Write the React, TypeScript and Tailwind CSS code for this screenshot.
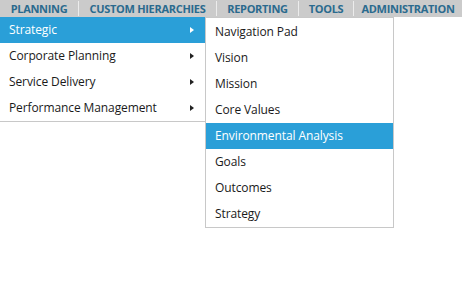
import React from 'react';

const topItems = [
  { label: 'PLANNING', w: 'w-[78px]' },
  { label: 'CUSTOM HIERARCHIES', w: 'w-[137px]' },
  { label: 'REPORTING', w: 'w-[81px]' },
  { label: 'TOOLS', w: 'w-[54px]' },
  { label: 'ADMINISTRATION', w: 'w-[108px]' },
];

const leftItems = ['Strategic', 'Corporate Planning', 'Service Delivery', 'Performance Management'];

const subItems = [
  'Navigation Pad',
  'Vision',
  'Mission',
  'Core Values',
  'Environmental Analysis',
  'Goals',
  'Outcomes',
  'Strategy',
];

const Arrow: React.FC<{ light: boolean }> = ({ light }) => (
  <svg width="4" height="6" viewBox="0 0 4 6" className="shrink-0">
    <path d="M0 0 L4 3 L0 6 Z" fill={light ? '#ffffff' : '#222222'} />
  </svg>
);

export default function App() {
  return (
    <div className="w-[469px] h-[294px] bg-white font-['Open_Sans',sans-serif] overflow-hidden">
      <div className="flex h-[17px] w-[462px] bg-[#cbcbcb] items-center">
        {topItems.map((item, i) => (
          <div key={item.label} className="flex items-center h-full">
            {i > 0 && <div className="w-px h-[15px] bg-[#ececec]" />}
            <span
              className={`${item.w} text-center whitespace-nowrap text-[11px] font-bold tracking-[-0.3px] text-[#2a6a8e] leading-none`}
            >
              {item.label}
            </span>
          </div>
        ))}
      </div>

      <div className="flex items-start">
        <div className="w-[205px] border-b border-[#c8c8c8]">
          {leftItems.map((item, i) => (
            <div
              key={item}
              className={`flex items-center justify-between h-[26px] pl-[9px] pr-[11px] text-[12px] whitespace-nowrap tracking-[-0.1px] ${
                i === 0 ? 'bg-[#2a9fd8] text-white' : 'text-[#1a1a1a]'
              }`}
            >
              <span>{item}</span>
              <Arrow light={i === 0} />
            </div>
          ))}
        </div>

        <div className="w-[189px] border border-[#c8c8c8] pt-px">
          {subItems.map((item) => (
            <div
              key={item}
              className={`flex items-center h-[26px] pl-[9px] text-[12px] whitespace-nowrap tracking-[-0.1px] ${
                item === 'Environmental Analysis' ? 'bg-[#2a9fd8] text-white' : 'text-[#1a1a1a]'
              }`}
            >
              {item}
            </div>
          ))}
        </div>
      </div>
    </div>
  );
}
